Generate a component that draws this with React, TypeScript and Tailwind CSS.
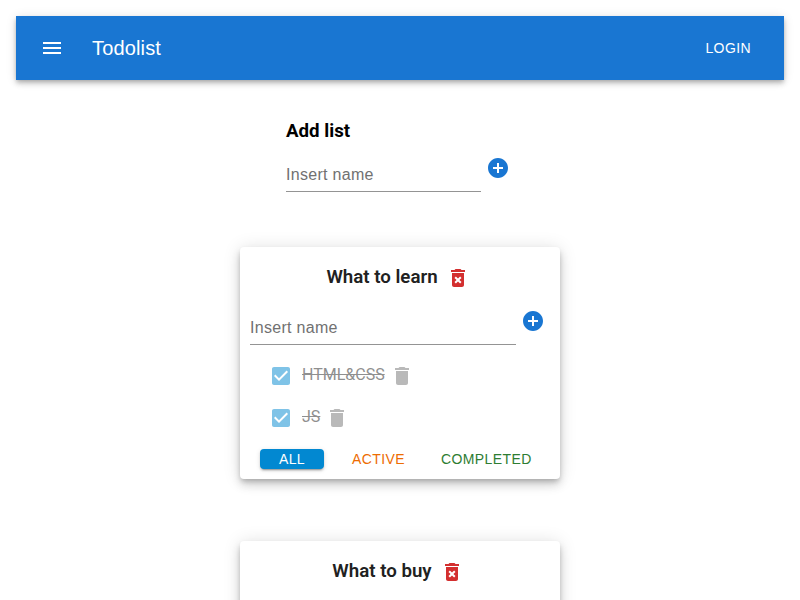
import React from 'react';

function Icon({ d, className = '' }: { d: string; className?: string }) {
  return (
    <svg viewBox="0 0 24 24" fill="currentColor" className={`block size-6 shrink-0 ${className}`}>
      <path d={d} />
    </svg>
  );
}

const MENU = 'M3 18h18v-2H3v2zm0-5h18v-2H3v2zm0-7v2h18V6H3z';
const ADD = 'M12 2C6.48 2 2 6.48 2 12s4.48 10 10 10 10-4.48 10-10S17.52 2 12 2zm5 11h-4v4h-2v-4H7v-2h4V7h2v4h4v2z';
const DELETE = 'M6 19c0 1.1.9 2 2 2h8c1.1 0 2-.9 2-2V7H6v12zM19 4h-3.5l-1-1h-5l-1 1H5v2h14V4z';
const DELETE_FOREVER =
  'M6 19c0 1.1.9 2 2 2h8c1.1 0 2-.9 2-2V7H6v12zm2.46-7.12l1.41-1.41L12 12.59l2.12-2.12 1.41 1.41L13.41 14l2.12 2.12-1.41 1.41L12 15.41l-2.12 2.12-1.41-1.41L10.59 14l-2.13-2.12zM15.5 4l-1-1h-5l-1 1H5v2h14V4z';
const CHECK =
  'M19 3H5c-1.11 0-2 .9-2 2v14c0 1.1.89 2 2 2h14c1.11 0 2-.9 2-2V5c0-1.1-.89-2-2-2zm-9 14l-5-5 1.41-1.41L10 14.17l7.59-7.59L19 8l-9 9z';

function AddForm({ inputClass }: { inputClass: string }) {
  return (
    <div className="flex items-start">
      <input
        placeholder="Insert name"
        className={`block h-8 border-b border-[#949494] bg-transparent pt-px pb-0.5 text-base tracking-[0.3px] outline-none placeholder:text-[#717171] ${inputClass}`}
      />
      <button className="ml-[5px] -mt-1 text-[#1976d2]">
        <Icon d={ADD} />
      </button>
    </div>
  );
}

function Task({ name, nameClass }: { name: string; nameClass: string }) {
  return (
    <li className="flex h-[42px] items-center opacity-50">
      <Icon d={CHECK} className="text-[#0288d1]" />
      <span className={`ml-[9px] -mt-0.5 font-[Roboto,sans-serif] text-base line-through text-[#212121] ${nameClass}`}>{name}</span>
      <Icon d={DELETE} className="ml-[5px] text-[#757575]" />
    </li>
  );
}

function TodoCard({ title, titleClass, tasks }: { title: string; titleClass: string; tasks: { name: string; cls: string }[] }) {
  return (
    <section className="h-[232px] w-80 rounded bg-white px-2.5 pt-4 shadow-[0_3px_5px_-1px_rgba(0,0,0,0.2),0_6px_10px_0_rgba(0,0,0,0.14),0_1px_18px_0_rgba(0,0,0,0.12)]">
      <div className="flex h-7 items-center justify-center">
        <h3 className={`font-[Roboto,sans-serif] text-[18.7px] leading-[26px] font-semibold text-[#212121] ${titleClass}`}>{title}</h3>
        <button className="mt-px ml-2 text-[#d32f2f]">
          <Icon d={DELETE_FOREVER} />
        </button>
        <span className="w-1" />
      </div>
      <div className="pt-[22px]">
        <AddForm inputClass="w-[266px]" />
      </div>
      <ul className="mt-2.5 pl-[19px]">
        {tasks.map((t) => (
          <Task key={t.name} name={t.name} nameClass={t.cls} />
        ))}
      </ul>
      <div className="mt-2.5 flex h-5 items-center pl-2.5 text-sm leading-5 tracking-[0.4px]">
        <button className="h-5 w-16 rounded bg-[#0288d1] text-white shadow-[0_3px_1px_-2px_rgba(0,0,0,0.2),0_2px_2px_0_rgba(0,0,0,0.14),0_1px_5px_0_rgba(0,0,0,0.12)]">
          ALL
        </button>
        <button className="ml-7 text-[#ed6c02]">ACTIVE</button>
        <button className="ml-9 text-[#2e7d32]">COMPLETED</button>
      </div>
    </section>
  );
}

export default function App() {
  return (
    <div className="h-[600px] overflow-hidden bg-white p-4 font-['Liberation_Sans',Arial,sans-serif]">
      <header className="flex h-16 items-center bg-[#1976d2] pr-[33px] pl-6 text-white shadow-[0_2px_4px_-1px_rgba(0,0,0,0.2),0_4px_5px_0_rgba(0,0,0,0.14),0_1px_10px_0_rgba(0,0,0,0.12)]">
        <Icon d={MENU} />
        <h1 className="ml-7 flex-1 text-xl tracking-[0.15px]">Todolist</h1>
        <button className="text-sm tracking-[0.4px]">LOGIN</button>
      </header>
      <main>
        <div className="mt-10 ml-[270px]">
          <h3 className="mb-[17px] font-[Roboto,sans-serif] text-[18.7px] leading-[22px] font-bold text-black">Add list</h3>
          <div className="pt-px">
            <AddForm inputClass="w-[195px]" />
          </div>
        </div>
        <div className="mt-[55px] flex flex-col items-center gap-[62px]">
          <TodoCard
            title="What to learn"
            titleClass=""
            tasks={[
              { name: 'HTML&CSS', cls: '' },
              { name: 'JS', cls: '' },
            ]}
          />
          <TodoCard
            title="What to buy"
            titleClass=""
            tasks={[
              { name: 'Milk', cls: '' },
              { name: 'Book', cls: '' },
            ]}
          />
        </div>
      </main>
    </div>
  );
}
